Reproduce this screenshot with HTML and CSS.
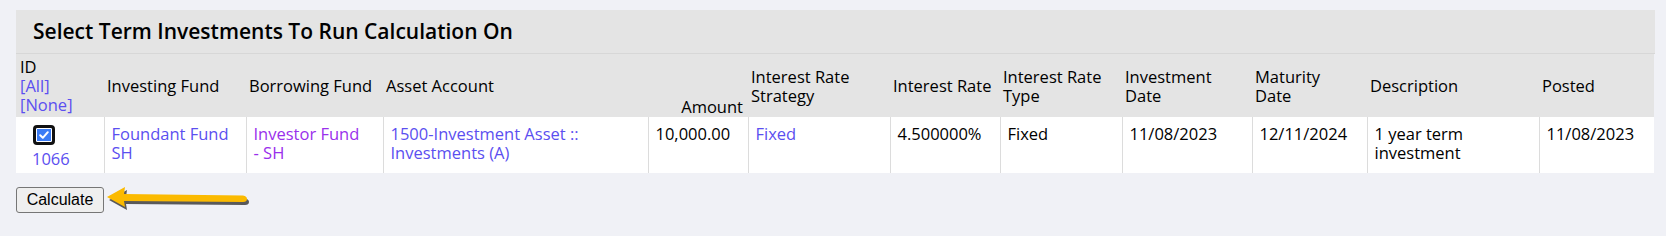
FILE: index.html
```html
<!DOCTYPE html>
<html lang="en">
<head>
  <title>Term Investment Calculation</title>
  <link rel="stylesheet" href="styles.css">
</head>
<body>
  <div class="panel">
    <div class="panel-title">Select Term Investments To Run Calculation On</div>
    <table class="grid">
      <colgroup>
        <col style="width:88px"><col style="width:142px"><col style="width:137px">
        <col style="width:265px"><col style="width:100px"><col style="width:142px">
        <col style="width:110px"><col style="width:122px"><col style="width:130px">
        <col style="width:115px"><col style="width:172px"><col style="width:115px">
      </colgroup>
      <thead>
        <tr>
          <th class="id-head">
            <span class="line">ID</span>
            <a href="#" class="line">[All]</a>
            <a href="#" class="line">[None]</a>
          </th>
          <th>Investing Fund</th>
          <th>Borrowing Fund</th>
          <th>Asset Account</th>
          <th class="amount-head">Amount</th>
          <th>Interest Rate Strategy</th>
          <th>Interest Rate</th>
          <th>Interest Rate Type</th>
          <th class="wrap-head">Investment Date</th>
          <th class="wrap-head">Maturity Date</th>
          <th>Description</th>
          <th>Posted</th>
        </tr>
      </thead>
      <tbody>
        <tr>
          <td class="id-cell">
            <span class="check">
              <svg width="12" height="12" viewBox="0 0 12 12"><path d="M2.2 6.3 L4.8 8.8 L9.8 3.2" fill="none" stroke="#fff" stroke-width="2" stroke-linecap="round" stroke-linejoin="round"/></svg>
            </span>
            <a href="#">1066</a>
          </td>
          <td><a href="#">Foundant Fund SH</a></td>
          <td><a href="#" class="visited">Investor Fund &#8209;&nbsp;SH</a></td>
          <td><a href="#">1500-Investment Asset :: Investments (A)</a></td>
          <td>10,000.00</td>
          <td><a href="#">Fixed</a></td>
          <td>4.500000%</td>
          <td>Fixed</td>
          <td>11/08/2023</td>
          <td>12/11/2024</td>
          <td>1 year term investment</td>
          <td>11/08/2023</td>
        </tr>
      </tbody>
    </table>
  </div>

  <div class="actions">
    <button type="button" class="calc-btn">Calculate</button>
    <svg class="pointer" width="146" height="26" viewBox="0 0 146 26">
      <g transform="translate(2 3)" fill="#333" opacity="0.8">
        <path d="M0 10 L18 0 L17 7 L136 8.5 Q140 9 140 12 Q140 15 136 15 L17 14 L18 20 Z"/>
      </g>
      <path d="M0 10 L18 0 L17 7 L136 8.5 Q140 9 140 12 Q140 15 136 15 L17 14 L18 20 Z" fill="#fbba00"/>
    </svg>
  </div>
</body>
</html>
```

FILE: styles.css
```css
body {
  margin: 0;
  padding: 10px 11px 0 16px;
  background-color: #f0f1f6;
  font-family: "Open Sans", "Noto Sans", sans-serif;
  font-size: 16.5px;
  color: #000;
}
a {
  color: #5b4ff0;
  text-decoration: none;
}
a.visited {
  color: #9a30ec;
}
.panel {
  width: 1639px;
}
.panel-title {
  height: 43px;
  line-height: 43px;
  padding-left: 17px;
  background-color: #e4e4e4;
  border-bottom: 1px solid #d7d7d7;
  font-size: 21px;
  font-weight: 600;
}
.grid {
  width: 1638px;
  table-layout: fixed;
  border-collapse: collapse;
  line-height: 19px;
}
.grid th {
  background-color: #e4e4e4;
  font-weight: normal;
  text-align: left;
  vertical-align: middle;
  padding: 3px 3px;
  height: 56px;
}
.grid th.id-head {
  padding-left: 4px;
}
.grid th.wrap-head {
  padding-right: 16px;
}
.id-head .line {
  display: block;
  line-height: 19px;
}
.grid th.amount-head {
  text-align: right;
  vertical-align: bottom;
  padding-right: 5px;
  padding-bottom: 1px;
}
.grid td {
  background-color: #fff;
  vertical-align: top;
  padding: 7px 6px 10px 7px;
  border-left: 1px solid #dcdcdc;
}
.grid td:first-child {
  border-left: none;
}
.grid td.id-cell {
  padding: 8px 0 5px 16px;
}
.check {
  display: flex;
  align-items: center;
  justify-content: center;
  width: 16px;
  height: 14px;
  margin-left: 1px;
  margin-bottom: 4px;
  border: 3px solid #111;
  border-radius: 4px;
  background-color: #3b7cf5;
  box-shadow: inset 0 0 0 1px #fff;
}
.id-cell a {
  display: block;
}
.actions {
  display: flex;
  align-items: center;
  margin-top: 13px;
}
.calc-btn {
  width: 88px;
  height: 26px;
  padding: 0;
  font-family: "Liberation Sans", Arial, sans-serif;
  font-size: 16px;
  color: #000;
  background-color: #efefef;
  border: 1px solid #767676;
  border-radius: 3px;
}
.pointer {
  margin-left: 3px;
  margin-top: 1px;
}
```
